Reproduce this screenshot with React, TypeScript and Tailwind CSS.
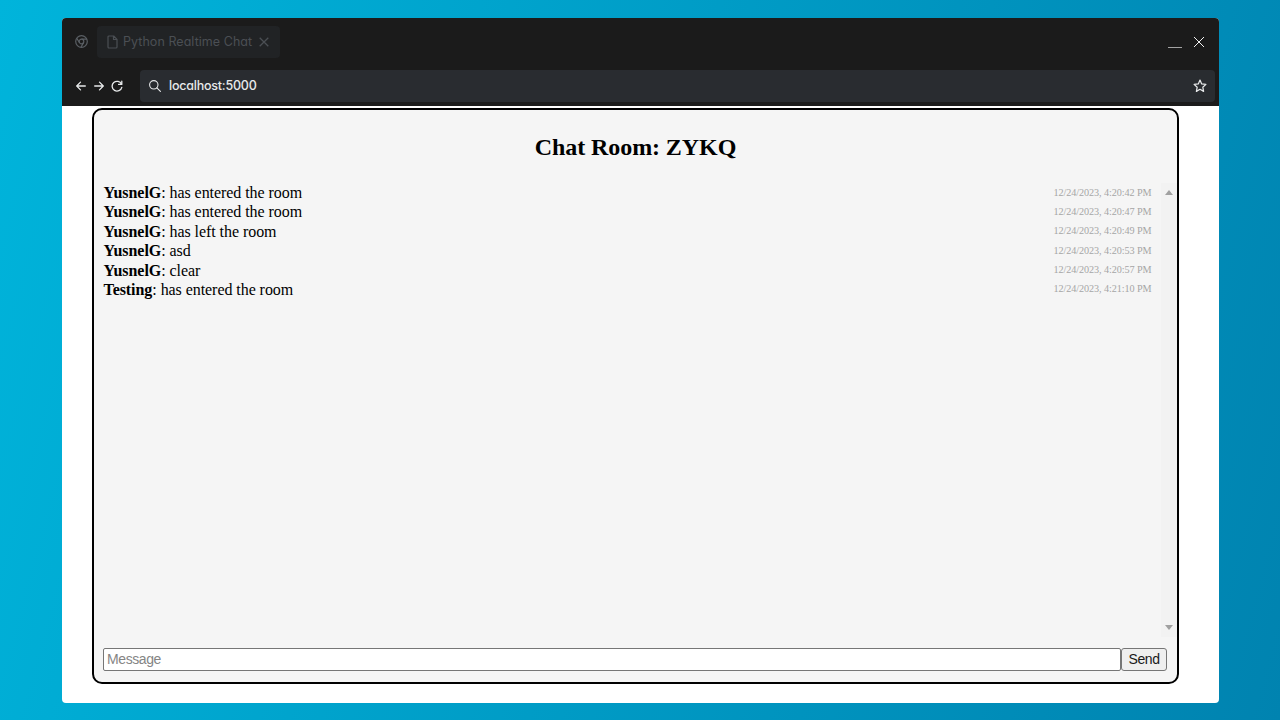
const messages = [
  { name: "YusnelG", text: "has entered the room", time: "12/24/2023, 4:20:42 PM" },
  { name: "YusnelG", text: "has entered the room", time: "12/24/2023, 4:20:47 PM" },
  { name: "YusnelG", text: "has left the room", time: "12/24/2023, 4:20:49 PM" },
  { name: "YusnelG", text: "asd", time: "12/24/2023, 4:20:53 PM" },
  { name: "YusnelG", text: "clear", time: "12/24/2023, 4:20:57 PM" },
  { name: "Testing", text: "has entered the room", time: "12/24/2023, 4:21:10 PM" },
];

function TabBar() {
  return (
    <div className="flex h-[52px] items-start pt-2">
      <svg className="mt-[9px] ml-[13px] size-[13px] shrink-0 text-[#5a5f64]" viewBox="0 0 13 13" fill="none" stroke="currentColor" strokeWidth="1.2">
        <circle cx="6.5" cy="6.5" r="5.8" />
        <circle cx="6.5" cy="6.5" r="2.3" />
        <path d="M6.5 4.2h5.3M4.5 7.6L1.7 3.2M8.5 7.6L6 12.2" />
      </svg>
      <div className="ml-[9px] flex h-8 w-[183px] items-center rounded bg-[#212325] pl-[10px] text-[#4b4f54]">
        <svg className="h-[14px] w-[11px] shrink-0" viewBox="0 0 11 14" fill="none" stroke="currentColor" strokeWidth="1.2" strokeLinejoin="round">
          <path d="M2 1h4.7L10 4.4V12a1 1 0 0 1-1 1H2a1 1 0 0 1-1-1V2a1 1 0 0 1 1-1ZM6.5 1v3.5H10" />
        </svg>
        <span className="ml-[5px] w-[131px] whitespace-nowrap text-[12.5px] leading-5 tracking-[0.05px] [font-feature-settings:'cv11']">Python Realtime Chat</span>
        <svg className="ml-[5px] size-[10px] shrink-0" viewBox="0 0 10 10" stroke="currentColor" strokeWidth="1.3">
          <path d="M.7.7l8.6 8.6M9.3.7L.7 9.3" />
        </svg>
      </div>
      <div className="mt-[21px] ml-auto h-px w-[14px] bg-[#a3a3a3]" />
      <svg className="mt-[11px] mr-[15px] ml-3 size-[10px]" viewBox="0 0 10 10" stroke="#f0f0f0" strokeWidth="1">
        <path d="M0 0l10 10M10 0L0 10" />
      </svg>
    </div>
  );
}

function AddressBar() {
  return (
    <div className="flex h-9 items-start pr-1 pl-[14px] text-[#e7e9ea]">
      <div className="flex h-8 w-16 items-center gap-2">
        <svg className="h-[10px] w-[10px]" viewBox="0 0 10 10" fill="none" stroke="currentColor" strokeWidth="1.3" strokeLinecap="round" strokeLinejoin="round">
          <path d="M9.3 5H.7M4.5 1.1L.7 5l3.8 3.9" />
        </svg>
        <svg className="h-[10px] w-[10px]" viewBox="0 0 10 10" fill="none" stroke="currentColor" strokeWidth="1.3" strokeLinecap="round" strokeLinejoin="round">
          <path d="M.7 5h8.6M5.5 1.1L9.3 5 5.5 8.9" />
        </svg>
        <svg className="-ml-px h-[12px] w-[12px]" viewBox="0 0 12 12" fill="none" stroke="currentColor" strokeWidth="1.3" strokeLinecap="round" strokeLinejoin="round">
          <path d="M10.8 1.2v3.2H7.6M10.5 4.2A4.9 4.9 0 1 0 10.8 7.3" />
        </svg>
      </div>
      <div className="flex h-8 flex-1 items-center rounded bg-[#292c30] pr-2 pl-[9px]">
        <svg className="size-3" viewBox="0 0 12 12" fill="none" stroke="currentColor" strokeWidth="1.1" strokeLinecap="round">
          <circle cx="4.8" cy="4.8" r="4.2" />
          <path d="M7.9 7.9l3.5 3.5" />
        </svg>
        <span className="ml-2 text-[12.5px] leading-5 font-medium tracking-[-0.22px] whitespace-nowrap [font-feature-settings:'cv11']">localhost:5000</span>
        <svg className="ml-auto size-[14px]" viewBox="0 0 14 14" fill="none" stroke="currentColor" strokeWidth="1.25" strokeLinejoin="round">
          <path d="M7 1.1l1.7 3.8 4.2.5-3.1 2.8.8 4.2L7 10.3l-3.6 2.1.8-4.2-3.1-2.8 4.2-.5Z" />
        </svg>
      </div>
    </div>
  );
}

function ScrollTrack() {
  return (
    <div className="flex h-[454px] w-4 flex-col items-center justify-between bg-[#f2f2f2] pt-[7px] pb-[7px]">
      <svg className="h-[5px] w-2" viewBox="0 0 8 5" fill="#a0a0a0">
        <path d="M4 0l4 5H0Z" />
      </svg>
      <svg className="h-[5px] w-2" viewBox="0 0 8 5" fill="#a0a0a0">
        <path d="M0 0h8L4 5Z" />
      </svg>
    </div>
  );
}

function ChatRoom() {
  return (
    <div className="mt-[2px] mr-[40px] ml-[30px] flex h-[576px] flex-col rounded-[10px] border-2 border-black bg-[#f5f5f5] font-['Liberation_Serif',serif] text-black">
      <h2 className="mt-[22px] h-[51px] text-center text-[24px] leading-[30px] font-bold tracking-[-0.08px]">Chat Room: ZYKQ</h2>
      <div className="flex justify-between pl-[9.5px]">
        <ul className="w-[1048px]">
          {messages.map((m) => (
            <li key={m.time} className="flex h-[19.4px] items-start justify-between">
              <span className="text-[16px] leading-[19px] tracking-[-0.06px]">
                <strong>{m.name}</strong>: {m.text}
              </span>
              <span className="pt-[0.5px] text-[10.2px] leading-[18px] tracking-[-0.09px] text-[#a5a5a5]">{m.time}</span>
            </li>
          ))}
        </ul>
        <ScrollTrack />
      </div>
      <div className="mt-[11px] flex h-[23px] pr-[10px] pl-[9px] font-['Liberation_Sans',sans-serif] text-[14px]">
        <input
          placeholder="Message"
          className="min-w-0 flex-1 rounded-[2px] border border-[#767676] bg-white px-[3px] pb-[2px] leading-5 tracking-[-0.4px] outline-none placeholder:text-[#858585]"
        />
        <button className="w-[46px] rounded-[3px] border border-[#767676] bg-[#efefef] leading-[19px] tracking-[-0.4px] text-[#1a1a1a]">Send</button>
      </div>
    </div>
  );
}

export default function App() {
  return (
    <main className="h-[720px] w-[1280px] overflow-hidden bg-[linear-gradient(105deg,#00b4db,#0083b0)] pt-[18px] pl-[62px] font-[Inter,sans-serif]">
      <div className="h-[685px] w-[1157px] overflow-hidden rounded-[4px] bg-white">
        <header className="h-[88px] bg-[#1b1b1b]">
          <TabBar />
          <AddressBar />
        </header>
        <ChatRoom />
      </div>
    </main>
  );
}
